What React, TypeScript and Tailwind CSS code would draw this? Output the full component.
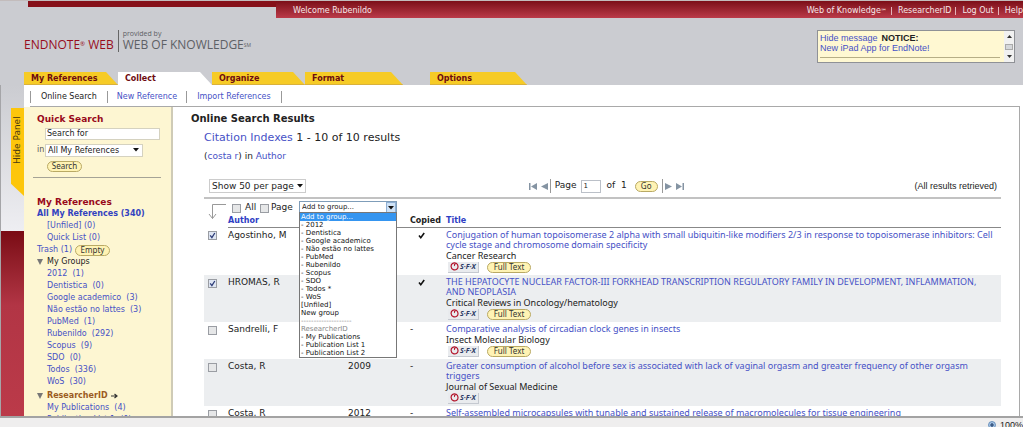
import React from 'react'
import { clsx } from 'clsx'

interface Reference {
    author: string
    year?: string
    copied: boolean
    checked: boolean
    title: string
    journal?: string
    fullText?: boolean
}

const references: Reference[] = [
    {
        author: 'Agostinho, M',
        copied: true,
        checked: true,
        title: 'Conjugation of human topoisomerase 2 alpha with small ubiquitin-like modifiers 2/3 in response to topoisomerase inhibitors: Cell\ncycle stage and chromosome domain specificity',
        journal: 'Cancer Research',
        fullText: true,
    },
    {
        author: 'HROMAS, R',
        copied: true,
        checked: true,
        title: 'THE HEPATOCYTE NUCLEAR FACTOR-III FORKHEAD TRANSCRIPTION REGULATORY FAMILY IN DEVELOPMENT, INFLAMMATION,\nAND NEOPLASIA',
        journal: 'Critical Reviews in Oncology/hematology',
        fullText: true,
    },
    {
        author: 'Sandrelli, F',
        copied: false,
        checked: false,
        title: 'Comparative analysis of circadian clock genes in insects',
        journal: 'Insect Molecular Biology',
        fullText: true,
    },
    {
        author: 'Costa, R',
        year: '2009',
        copied: false,
        checked: false,
        title: 'Greater consumption of alcohol before sex is associated with lack of vaginal orgasm and greater frequency of other orgasm\ntriggers',
        journal: 'Journal of Sexual Medicine',
    },
    {
        author: 'Costa, R',
        year: '2012',
        copied: false,
        checked: false,
        title: 'Self-assembled microcapsules with tunable and sustained release of macromolecules for tissue engineering',
    },
]

const groups: [string, number][] = [
    ['2012', 1],
    ['Dentistica', 0],
    ['Google academico', 3],
    ['Não estão no lattes', 3],
    ['PubMed', 1],
    ['Rubenildo', 292],
    ['Scopus', 9],
    ['SDO', 0],
    ['Todos', 336],
    ['WoS', 30],
]

const groupOptions = [
    'Add to group...',
    '- 2012',
    '- Dentistica',
    '- Google academico',
    '- Não estão no lattes',
    '- PubMed',
    '- Rubenildo',
    '- Scopus',
    '- SDO',
    '- Todos *',
    '- WoS',
    '[Unfiled]',
    'New group',
    '--------------------',
    'ResearcherID',
    '- My Publications',
    '- Publication List 1',
    '- Publication List 2',
]

const tabs = [
    { label: 'My References', width: 'w-[94px]' },
    { label: 'Collect', width: 'w-[94px]', active: true },
    { label: 'Organize', width: 'w-[93px]' },
    { label: 'Format', width: 'w-[98px]' },
    { label: 'Options', width: 'w-[97px]', gap: true },
]

const link = 'text-[#4651c6] hover:underline'

const Caret: React.FC<{ className?: string }> = ({ className }) => (
    <svg viewBox="0 0 6 4" className={clsx('pointer-events-none absolute h-1 w-1.5', className)}>
        <path d="M0 0h6L3 3.6z" fill="#111" />
    </svg>
)

const PillButton: React.FC<{ children: React.ReactNode; className?: string }> = ({ children, className }) => (
    <button
        className={clsx(
            "flex h-[11px] items-center justify-center rounded-full border border-[#b9a964] bg-[#fff3b4] pb-0.5 font-['Noto_Sans',sans-serif] text-[8px] leading-[9px] text-[#333]",
            className,
        )}
    >
        {children}
    </button>
)

const Tick: React.FC<{ label: string; checked?: boolean }> = ({ label, checked }) => (
    <span className="relative block size-[9px] shrink-0">
        <input
            type="checkbox"
            aria-label={label}
            defaultChecked={checked}
            className="peer block size-[9px] appearance-none border border-[#9a9da3] bg-[#e6e7e8] checked:bg-[#dfe6f3]"
        />
        <svg viewBox="0 0 9 9" className="pointer-events-none absolute inset-0 hidden size-[9px] peer-checked:block">
            <path d="M2.2 4.4l1.7 2.2L6.8 2" fill="none" stroke="#2d3c78" strokeWidth="1.3" />
        </svg>
    </span>
)

const SfxBadge = () => (
    <a href="#" className="flex h-[11px] w-[31px] items-center gap-px border-r border-b border-[#c5c9d0] bg-[#e9ebee] pl-0.5">
        <svg viewBox="0 0 9 9" className="size-[9px] shrink-0" fill="none" stroke="#b3142b">
            <path d="M6.2 1.3C3.300 0 .9 2 1.100 4.500c.1 1.500 1 2.700 2.200 3.100M3.300 7.600c2.700.9 4.900-1 4.700-3.300C7.900 3 7.300 2 6.200 1.300" strokeWidth="1.2" />
            <path d="M6.2 1.500C4.600 1.700 4 2.900 4.700 3.800" strokeWidth="1.1" />
        </svg>
        <span className="font-['Open_Sans',sans-serif] text-[7px] leading-[9px] font-bold whitespace-nowrap text-[#2d3d66] italic">S·F·X</span>
    </a>
)

const TopBar = () => (
    <div className="flex h-[18px] border-t border-[#c3bcbc] pl-7">
        <div className="h-1.5 w-[248px] shrink-0 bg-[#861019]" />
        <div className="flex flex-1 items-center justify-between overflow-hidden bg-linear-to-b from-[#7c0e18] to-[#bb3a49] pt-0.5 pl-[17px] text-[8px] whitespace-nowrap text-[#f6e8ea]">
            <span>Welcome Rubenildo</span>
            <nav className="flex items-center leading-2">
                <a href="#">Web of Knowledge<span className="text-[6px]">℠</span></a>
                <a href="#" className="ml-1 border-l border-[#e3b4ba] pl-1.5">ResearcherID</a>
                <a href="#" className="ml-1 border-l border-[#e3b4ba] pl-1.5">Log Out</a>
                <a href="#" className="ml-1 border-l border-[#e3b4ba] pl-1.5">Help</a>
            </nav>
        </div>
    </div>
)

const Logo = () => (
    <div className="flex items-end font-['Open_Sans',sans-serif] text-[12px] leading-[14px] whitespace-nowrap">
        <span className="font-medium text-[#980c1c]">
            ENDNOTE<sup className="text-[6px] leading-none">®</sup> WEB
        </span>
        <div className="ml-1 border-l border-[#666] pl-1 font-medium text-[#5d6065]">
            <div className="text-[7px] leading-[8px]">provided by</div>
            <div>
                WEB OF KNOWLEDGE<sup className="text-[5px] leading-none">SM</sup>
            </div>
        </div>
    </div>
)

const Notice = () => (
    <div className="flex h-[33px] w-[198px] border border-[#8f9196] bg-[#fff8d2] font-['Liberation_Sans',sans-serif] text-[9px] leading-[10px]">
        <div className="flex-1 pt-0.5 pl-0.5 whitespace-nowrap">
            <a href="#" className={link}>Hide message</a>
            <b className="ml-1">NOTICE:</b>
            <br />
            <a href="#" className={link}>New iPad App for EndNote!</a>
            <hr className="mt-1 mr-1 border-[#b6ae86]" />
        </div>
        <div className="flex w-2.5 flex-col items-center justify-between bg-[#f1f1f1] py-1">
            <svg viewBox="0 0 5 3" className="h-[3px] w-[5px]"><path d="M0 3h5L2.5 0z" fill="#333" /></svg>
            <span className="h-1.5 w-2 border border-[#aaa] bg-[#d5d7da]" />
            <svg viewBox="0 0 5 3" className="h-[3px] w-[5px]"><path d="M0 0h5L2.5 3z" fill="#333" /></svg>
        </div>
    </div>
)

const Tabs = () => (
    <nav className="flex text-[8px] leading-[14px] font-bold text-[#6e0b10]">
        {tabs.map((tab) => (
            <a
                key={tab.label}
                href="#"
                className={clsx(
                    'h-[13px] pl-[7px] [clip-path:polygon(0_0,calc(100%_-_12px)_0,100%_100%,0_100%)]',
                    tab.width,
                    tab.active ? 'bg-white' : 'border-b border-[#d9b13c] bg-[#f6cb26]',
                    tab.gap && 'ml-[27px]',
                )}
            >
                {tab.label}
            </a>
        ))}
    </nav>
)

const SubNav = () => (
    <nav className="ml-1.5 flex h-[22px] items-center border-b border-[#a9a9a9] pt-0.5 text-[8px] leading-[12px] whitespace-nowrap">
        <a href="#" className="border-l border-[#999] px-2.5 text-[#222]">Online Search</a>
        <a href="#" className={clsx(link, 'border-l border-[#999] px-[9px]')}>New Reference</a>
        <a href="#" className={clsx(link, 'border-x border-[#999] px-2.5')}>Import References</a>
    </nav>
)

const Sidebar = () => (
    <aside className="w-[149px] shrink-0 overflow-hidden border-r-2 border-[#cfcbb6] bg-[#fdf6d2] pt-1.5 pl-[13px] text-[8px] leading-[12px] whitespace-nowrap">
        <h2 className="text-[9px] font-bold text-[#98091b]">Quick Search</h2>
        <input
            aria-label="Search for"
            defaultValue="Search for"
            className="mt-[3px] ml-2 block h-3 w-[115px] border border-[#d5d2c0] bg-white px-px"
        />
        <div className="mt-1 flex text-[#555]">
            <label htmlFor="scope" className="w-2">in</label>
            <div className="relative">
                <select id="scope" className="block h-[13px] w-[98px] appearance-none border border-[#d5d2c0] bg-white px-0.5 text-[#222]">
                    <option>All My References</option>
                </select>
                <Caret className="top-1 right-1" />
            </div>
        </div>
        <PillButton className="mt-1 ml-2.5 w-[35px]">Search</PillButton>
        <hr className="mt-[5px] mr-2.5 -ml-1 border-[#a5a396]" />

        <h2 className="mt-[18px] text-[9px] font-bold text-[#98091b]">My References</h2>
        <a href="#" className="block font-bold text-[#3342c0]">All My References (340)</a>
        <a href="#" className={clsx(link, 'ml-2.5 block')}>[Unfiled] (0)</a>
        <a href="#" className={clsx(link, 'ml-2.5 block')}>Quick List (0)</a>
        <div className="flex items-center">
            <a href="#" className={link}>Trash (1)</a>
            <PillButton className="ml-[3px] w-[35px]">Empty</PillButton>
        </div>
        <div className="flex items-center text-[#222]">
            <svg viewBox="0 0 6 6" className="mr-1 size-1.5"><path d="M0 0h6L3 6z" fill="#777" /></svg>
            My Groups
        </div>
        <ul className="ml-2.5">
            {groups.map(([name, count]) => (
                <li key={name}>
                    <a href="#" className={link}>{name}&nbsp; ({count})</a>
                </li>
            ))}
        </ul>
        <div className="mt-0.5 flex items-center font-bold text-[#9b5b22]">
            <svg viewBox="0 0 6 6" className="mr-1 size-1.5"><path d="M0 0h6L3 6z" fill="#777" /></svg>
            ResearcherID
            <svg viewBox="0 0 7 6" className="ml-[3px] h-1.5 w-[7px]"><path d="M0 3h5M3.5 1L6 3 3.5 5" fill="none" stroke="#333" strokeWidth="1.2" /></svg>
        </div>
        <ul className="ml-2.5">
            <li><a href="#" className={link}>My Publications&nbsp; (4)</a></li>
            <li><a href="#" className={link}>Publication List 1&nbsp; (0)</a></li>
        </ul>
    </aside>
)

const Pager = () => (
    <div className="flex items-center pr-2">
        <button aria-label="First page">
            <svg viewBox="0 0 8 7" className="h-[7px] w-2"><path d="M0 0h1.5v7H0zM8 0v7L2 3.5z" fill="#8594a3" /></svg>
        </button>
        <button aria-label="Previous page" className="ml-1">
            <svg viewBox="0 0 7 7" className="size-[7px]"><path d="M7 0v7L0 3.5z" fill="#8594a3" /></svg>
        </button>
        <label className="ml-0.5 flex h-3.5 items-center border-l border-[#999] pl-1">
            Page
            <input defaultValue="1" className="ml-1 h-[13px] w-5 border border-[#bbc0c8] px-0.5 text-[7px]" />
        </label>
        <span className="ml-1.5">of&nbsp; 1</span>
        <PillButton className="ml-2 w-[23px]">Go</PillButton>
        <button aria-label="Next page" className="ml-1 flex h-3.5 items-center border-l border-[#999] pl-0.5">
            <svg viewBox="0 0 7 7" className="size-[7px]"><path d="M0 0v7l7-3.5z" fill="#8594a3" /></svg>
        </button>
        <button aria-label="Last page" className="ml-1">
            <svg viewBox="0 0 8 7" className="h-[7px] w-2"><path d="M6.5 0H8v7H6.5zM0 0v7l6-3.5z" fill="#8594a3" /></svg>
        </button>
    </div>
)

const GroupSelect = () => (
    <div className="relative w-[98px] text-[7px]">
        <select aria-label="Add to group" className="block h-[13px] w-full appearance-none border border-[#7f9db9] bg-white px-0.5">
            <option>Add to group...</option>
        </select>
        <span className="pointer-events-none absolute top-px right-px h-[11px] w-2.5 border border-[#8fb0d4] bg-[#cfe2f6]" />
        <Caret className="top-[5px] right-[3px]" />
        <ul role="listbox" className="absolute top-[11px] left-0 z-10 w-full border border-[#777] bg-white leading-[8px] whitespace-nowrap text-[#111]">
            {groupOptions.map((option, i) => (
                <li
                    key={option}
                    role="option"
                    aria-selected={i === 0}
                    className={clsx(
                        'pl-px',
                        i === 0 && 'bg-[#3595f0] text-white',
                        (option === 'ResearcherID' || option.startsWith('---')) && 'text-[#888]',
                    )}
                >
                    {option}
                </li>
            ))}
        </ul>
    </div>
)

const ResultsTable = () => (
    <table className="w-full table-fixed border-collapse text-left leading-[10px]">
        <colgroup>
            <col className="w-6" />
            <col className="w-[120px]" />
            <col className="w-[62px]" />
            <col className="w-9" />
            <col />
        </colgroup>
        <thead>
            <tr className="h-3 align-middle">
                <td />
                <th className="border-b border-[#888] text-[8px]"><a href="#" className="text-[#2f3ec4]">Author</a></th>
                <th className="border-b border-[#888]" />
                <th className="border-b border-[#888] text-[8px]">Copied</th>
                <th className="border-b border-[#888] text-[8px]"><a href="#" className="text-[#2f3ec4]">Title</a></th>
            </tr>
        </thead>
        <tbody>
            {references.map((item) => (
                <tr key={item.title} className="align-top odd:bg-white even:bg-[#eceef0]">
                    <td className="pt-1 pl-1"><Tick label={`Select ${item.author}`} checked={item.checked} /></td>
                    <td className="pt-0.5">{item.author}</td>
                    <td className="pt-0.5">{item.year}</td>
                    <td className="pt-0.5">
                        {item.copied ? (
                            <svg viewBox="0 0 7 7" className="mt-0.5 ml-2 size-[7px]"><path d="M1 3.5l1.8 2.2L6.2 1" fill="none" stroke="#111" strokeWidth="1.6" /></svg>
                        ) : (
                            '-'
                        )}
                    </td>
                    <td className="pt-0.5 pb-px font-['Noto_Sans',sans-serif]">
                        <a href="#" className={clsx(link, 'block whitespace-pre-line')}>{item.title}</a>
                        {item.journal && (
                            <>
                                <div className="leading-[11px]">{item.journal}</div>
                                <div className="flex h-[13px] items-center gap-2 pl-0.5">
                                    <SfxBadge />
                                    {item.fullText && <PillButton className="w-11">Full Text</PillButton>}
                                </div>
                            </>
                        )}
                    </td>
                </tr>
            ))}
        </tbody>
    </table>
)

const Results = () => (
    <main className="min-w-0 flex-1 overflow-hidden border-r border-[#a9a9a9] pt-[5px] pr-[18px] pl-[18px] text-[9px] whitespace-nowrap text-[#222]">
        <h1 className="text-[10px] leading-[14px] font-bold">Online Search Results</h1>
        <div className="pl-[13px]">
            <p className="mt-1 text-[11px] leading-[15px]">
                <a href="#" className={link}>Citation Indexes</a> 1 - 10 of 10 results
            </p>
            <p className="mt-1 leading-[14px]">
                (<a href="#" className={link}>costa r</a>) in <a href="#" className={link}>Author</a>
            </p>
            <div className="mt-4 flex h-[18px] items-start justify-between pl-[5px]">
                <div className="relative">
                    <select aria-label="Results per page" className="block h-3.5 w-[97px] appearance-none border border-[#ccc] bg-white px-0.5">
                        <option>Show 50 per page</option>
                    </select>
                    <Caret className="top-[5px] right-[3px]" />
                </div>
                <Pager />
                <span className="mr-1 font-['Liberation_Sans',sans-serif] leading-[14px]">(All results retrieved)</span>
            </div>
            <div className="flex items-start border-t-2 border-[#c2c2c2] pt-0.5 pl-1">
                <svg viewBox="0 0 18 18" className="-mb-2 size-[18px]"><path d="M18 3.5H4.5v14M1 13l3.5 4.5L8 13" fill="none" stroke="#999" /></svg>
                <label className="ml-1.5 flex h-3.5 w-7 items-center gap-1"><Tick label="All" />All</label>
                <label className="flex h-3.5 w-[39px] items-center gap-0.5"><Tick label="Page" />Page</label>
                <GroupSelect />
            </div>
            <ResultsTable />
        </div>
    </main>
)

const App: React.FC = () => (
    <div className="flex h-screen flex-col overflow-hidden bg-white font-['DejaVu_Sans',Verdana,sans-serif] text-[#222]">
        <header className="bg-[#cbccd1]">
            <TopBar />
            <div className="flex h-[54px] items-start justify-between pr-2 pl-6">
                <div className="pt-3"><Logo /></div>
                <div className="pt-3"><Notice /></div>
            </div>
            <div className="pl-6"><Tabs /></div>
        </header>
        <div className="flex min-h-0 flex-1">
            <div className="flex w-6 shrink-0 flex-col border-l border-[#a5a5a8]">
                <div className="flex h-[146px] items-start justify-end bg-linear-to-b from-[#cbccd1] to-[#eeeef2] pt-[23px]">
                    <button className="flex h-[88px] w-[13px] rotate-180 items-center justify-end bg-[#fdc60b] pb-2 text-[9px] leading-[13px] text-[#4a3b12] [clip-path:polygon(0_0,100%_14%,100%_100%,0_100%)] [writing-mode:vertical-rl]">
                        Hide Panel
                    </button>
                </div>
                <div className="flex-1 bg-linear-to-b from-[#7a0a14] via-[#b23545] via-40% to-[#bb3a49]" />
            </div>
            <div className="mr-[3px] flex min-w-0 flex-1 flex-col">
                <SubNav />
                <div className="flex min-h-0 flex-1">
                    <Sidebar />
                    <Results />
                </div>
            </div>
        </div>
        <footer className="flex h-[11px] shrink-0 items-center justify-end gap-1 overflow-hidden border-t-2 border-[#a3a3a3] bg-[#efeeee] pt-[5px] font-['Liberation_Sans',sans-serif] text-[9px] leading-[10px]">
            <svg viewBox="0 0 8 8" className="size-2"><circle cx="4" cy="4" r="3.5" fill="#a8c6e6" stroke="#5580b0" strokeWidth=".8" /><path d="M2 4h4M4 2v4" stroke="#23426f" strokeWidth="1.2" /></svg>
            100%
        </footer>
    </div>
)

export default App
